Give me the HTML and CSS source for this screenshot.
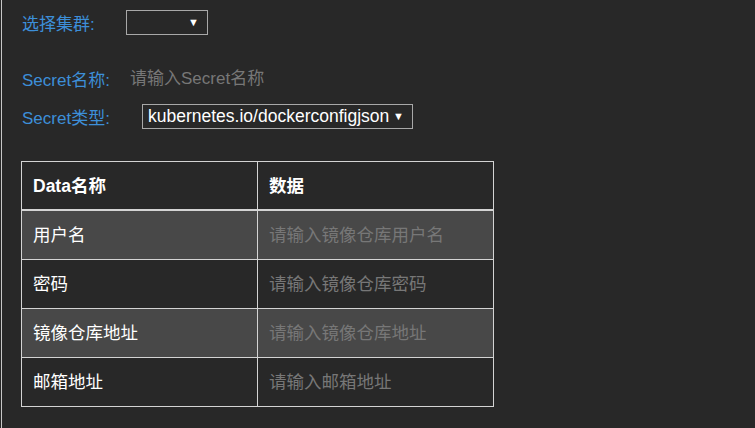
FILE: index.html
```html
<!DOCTYPE html>
<html>
<head>
<meta charset="utf-8">
<link rel="stylesheet" href="styles.css">
</head>
<body>
<div class="frame">
  <div class="form-row row-cluster">
    <label class="label label-cluster">选择集群:</label>
    <div class="select select-cluster"><span class="select-text"></span><span class="caret">▼</span></div>
  </div>
  <div class="form-row row-name">
    <label class="label label-name">Secret名称:</label>
    <input class="text-input" type="text" placeholder="请输入Secret名称">
  </div>
  <div class="form-row row-type">
    <label class="label label-type">Secret类型:</label>
    <div class="select select-type"><span class="select-text">kubernetes.io/dockerconfigjson</span><span class="caret">▼</span></div>
  </div>
  <table class="data-table">
    <thead>
      <tr><th class="col-name">Data名称</th><th>数据</th></tr>
    </thead>
    <tbody>
      <tr class="striped"><td>用户名</td><td><input class="cell-input" type="text" placeholder="请输入镜像仓库用户名"></td></tr>
      <tr><td>密码</td><td><input class="cell-input" type="text" placeholder="请输入镜像仓库密码"></td></tr>
      <tr class="striped"><td>镜像仓库地址</td><td><input class="cell-input" type="text" placeholder="请输入镜像仓库地址"></td></tr>
      <tr><td>邮箱地址</td><td><input class="cell-input" type="text" placeholder="请输入邮箱地址"></td></tr>
    </tbody>
  </table>
</div>
</body>
</html>
```

FILE: styles.css
```css
html, body {
  margin: 0;
  padding: 0;
  background: #282828;
  height: 100%;
}
body {
  font-family: "Liberation Sans", "Noto Sans CJK SC", sans-serif;
  font-size: 17.5px;
  color: #ffffff;
  overflow: hidden;
}
.frame {
  margin-left: 1px;
  border-left: 1px solid #c8c8c8;
  min-height: 100%;
  padding: 10px 0 0 20px;
  box-sizing: border-box;
}
.form-row {
  display: flex;
  align-items: center;
  height: 25px;
}
.row-name { margin-top: 31px; }
.row-type { margin-top: 13px; }
.label {
  color: #3d8fd9;
  flex: none;
  font-size: 17px;
}
.label-cluster { width: 104px; }
.label-name { width: 108px; }
.label-type { width: 120px; }
.select {
  box-sizing: border-box;
  height: 25px;
  border: 1px solid #a8a8a8;
  display: flex;
  align-items: center;
  justify-content: space-between;
  padding: 0 8px 0 5px;
  color: #ffffff;
}
.select-cluster { width: 82px; }
.select-type { width: 271px; }
.caret {
  font-size: 11px;
  color: #ffffff;
  line-height: 1;
}
.text-input {
  background: transparent;
  border: 0;
  outline: none;
  padding: 0;
  font: inherit;
  font-size: 17px;
  color: #ffffff;
  width: 300px;
}
.text-input::placeholder,
.cell-input::placeholder {
  color: #777777;
}
.data-table {
  margin-top: 32px;
  margin-left: -1px;
  border-collapse: collapse;
  width: 473px;
}
.data-table th,
.data-table td {
  border: 1px solid #d4d4d4;
  text-align: left;
  padding: 12px 11px;
  line-height: 24px;
  vertical-align: middle;
}
.data-table th {
  font-weight: bold;
  border-bottom-width: 2px;
  padding: 12px 11px 11px;
}
.col-name { width: 213px; }
.striped td { background: #484848; }
.cell-input {
  background: transparent;
  border: 0;
  outline: none;
  padding: 0;
  font: inherit;
  color: #ffffff;
  width: 100%;
  height: 24px;
}
```
